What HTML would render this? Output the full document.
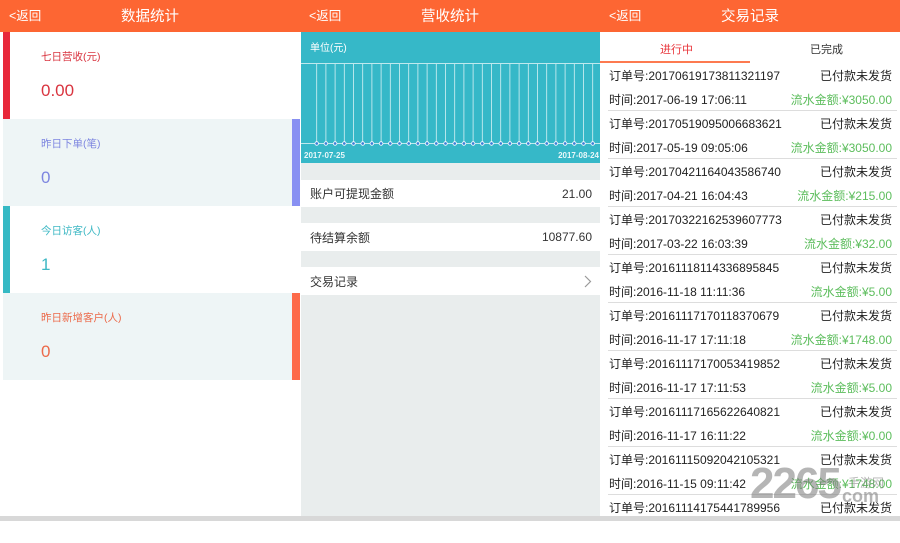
<!DOCTYPE html>
<html><head><meta charset="utf-8"><style>
*{margin:0;padding:0;box-sizing:border-box}
body{width:900px;height:521px;overflow:hidden;background:#fff;font-family:"Liberation Sans","Noto Sans CJK SC",sans-serif;position:relative}
.abs{position:absolute}
.hdr{position:absolute;top:0;height:32px;width:300px;background:#fd6633;color:#fff}
.hdr .b{position:absolute;left:9px;top:9px;font-size:12.5px;line-height:14px}
.hdr .t{position:absolute;left:0;right:0;text-align:center;top:8px;font-size:14.5px;line-height:18px}
.card{position:absolute;left:3px;width:297px;height:87px}
.card .l{position:absolute;left:38px;top:17px;font-size:10.5px}
.card .v{position:absolute;left:38px;top:49px;font-size:17px}
.row{position:absolute;left:301px;width:299px;background:#fff;font-size:12px;color:#333}
.row span{position:absolute;top:0;bottom:0;display:flex;align-items:center}
.rec{position:absolute;left:600px;width:297px;height:48px;font-size:12px;color:#222;line-height:14px}
.rec .a{position:absolute;left:9px;top:6px}
.rec .s{position:absolute;right:5px;top:6px}
.rec .c{position:absolute;left:9px;top:30px}
.rec .m{position:absolute;right:5px;top:30px;color:#5cbd5c}
.rec .ln{position:absolute;left:8px;right:0;top:47px;height:1px;background:#ddd}
</style></head><body>
<div class="hdr" style="left:0"><span class="b">&lt;返回</span><span class="t">数据统计</span></div>
<div class="card" style="top:32px;background:#fff"><div class="abs" style="left:0;top:0;width:7px;height:87px;background:#e8283a"></div><span class="l" style="color:#d9343f">七日营收(元)</span><span class="v" style="color:#d9343f">0.00</span></div>
<div class="card" style="top:119px;background:#eef5f6"><div class="abs" style="right:0;top:0;width:8px;height:87px;background:#8890f2"></div><span class="l" style="color:#7d86e0">昨日下单(笔)</span><span class="v" style="color:#7d86e0">0</span></div>
<div class="card" style="top:206px;background:#fff"><div class="abs" style="left:0;top:0;width:7px;height:87px;background:#36b9c4"></div><span class="l" style="color:#3eb8c4">今日访客(人)</span><span class="v" style="color:#3eb8c4">1</span></div>
<div class="card" style="top:293px;background:#eef5f6"><div class="abs" style="right:0;top:0;width:8px;height:87px;background:#fd6a4a"></div><span class="l" style="color:#ec6a4a">昨日新增客户(人)</span><span class="v" style="color:#ec6a4a">0</span></div>
<div class="abs" style="left:301px;top:32px;width:299px;height:484px;background:#e9eded"></div>
<div class="hdr" style="left:300px"><span class="b">&lt;返回</span><span class="t">营收统计</span></div>
<svg class="abs" style="left:301px;top:32px" width="299" height="131">
<rect width="299" height="131" fill="#36b8c8"/>
<text x="9" y="19" font-size="10" fill="#fff" font-family="Liberation Sans,Noto Sans CJK SC,sans-serif">单位(元)</text>
<line x1="0" y1="31.5" x2="299" y2="31.5" stroke="#bfe9ee" stroke-width="1"/>
<line x1="0" y1="111.5" x2="299" y2="111.5" stroke="#bfe9ee" stroke-width="1"/>
<g stroke="#d6f1f4" stroke-width="0.8">
<line x1="15.7" y1="32" x2="15.7" y2="111"/><line x1="24.9" y1="32" x2="24.9" y2="111"/><line x1="34.1" y1="32" x2="34.1" y2="111"/><line x1="43.3" y1="32" x2="43.3" y2="111"/><line x1="52.5" y1="32" x2="52.5" y2="111"/><line x1="61.7" y1="32" x2="61.7" y2="111"/><line x1="70.9" y1="32" x2="70.9" y2="111"/><line x1="80.1" y1="32" x2="80.1" y2="111"/><line x1="89.3" y1="32" x2="89.3" y2="111"/><line x1="98.5" y1="32" x2="98.5" y2="111"/><line x1="107.7" y1="32" x2="107.7" y2="111"/><line x1="116.9" y1="32" x2="116.9" y2="111"/><line x1="126.1" y1="32" x2="126.1" y2="111"/><line x1="135.3" y1="32" x2="135.3" y2="111"/><line x1="144.5" y1="32" x2="144.5" y2="111"/><line x1="153.7" y1="32" x2="153.7" y2="111"/><line x1="162.9" y1="32" x2="162.9" y2="111"/><line x1="172.1" y1="32" x2="172.1" y2="111"/><line x1="181.3" y1="32" x2="181.3" y2="111"/><line x1="190.5" y1="32" x2="190.5" y2="111"/><line x1="199.7" y1="32" x2="199.7" y2="111"/><line x1="208.9" y1="32" x2="208.9" y2="111"/><line x1="218.1" y1="32" x2="218.1" y2="111"/><line x1="227.3" y1="32" x2="227.3" y2="111"/><line x1="236.5" y1="32" x2="236.5" y2="111"/><line x1="245.7" y1="32" x2="245.7" y2="111"/><line x1="254.9" y1="32" x2="254.9" y2="111"/><line x1="264.1" y1="32" x2="264.1" y2="111"/><line x1="273.3" y1="32" x2="273.3" y2="111"/><line x1="282.5" y1="32" x2="282.5" y2="111"/><line x1="291.7" y1="32" x2="291.7" y2="111"/>
</g>
<g fill="#3a7fd8" stroke="#fff" stroke-width="0.8">
<circle cx="15.7" cy="111.5" r="1.8"/><circle cx="24.9" cy="111.5" r="1.8"/><circle cx="34.1" cy="111.5" r="1.8"/><circle cx="43.3" cy="111.5" r="1.8"/><circle cx="52.5" cy="111.5" r="1.8"/><circle cx="61.7" cy="111.5" r="1.8"/><circle cx="70.9" cy="111.5" r="1.8"/><circle cx="80.1" cy="111.5" r="1.8"/><circle cx="89.3" cy="111.5" r="1.8"/><circle cx="98.5" cy="111.5" r="1.8"/><circle cx="107.7" cy="111.5" r="1.8"/><circle cx="116.9" cy="111.5" r="1.8"/><circle cx="126.1" cy="111.5" r="1.8"/><circle cx="135.3" cy="111.5" r="1.8"/><circle cx="144.5" cy="111.5" r="1.8"/><circle cx="153.7" cy="111.5" r="1.8"/><circle cx="162.9" cy="111.5" r="1.8"/><circle cx="172.1" cy="111.5" r="1.8"/><circle cx="181.3" cy="111.5" r="1.8"/><circle cx="190.5" cy="111.5" r="1.8"/><circle cx="199.7" cy="111.5" r="1.8"/><circle cx="208.9" cy="111.5" r="1.8"/><circle cx="218.1" cy="111.5" r="1.8"/><circle cx="227.3" cy="111.5" r="1.8"/><circle cx="236.5" cy="111.5" r="1.8"/><circle cx="245.7" cy="111.5" r="1.8"/><circle cx="254.9" cy="111.5" r="1.8"/><circle cx="264.1" cy="111.5" r="1.8"/><circle cx="273.3" cy="111.5" r="1.8"/><circle cx="282.5" cy="111.5" r="1.8"/><circle cx="291.7" cy="111.5" r="1.8"/>
</g>
<text x="3" y="126" font-size="8" font-weight="bold" fill="#e8f7f9" font-family="Liberation Sans,sans-serif">2017-07-25</text>
<text x="298" y="126" font-size="8" font-weight="bold" fill="#e8f7f9" text-anchor="end" font-family="Liberation Sans,sans-serif">2017-08-24</text>
</svg>
<div class="row" style="top:180px;height:27px"><span style="left:9px">账户可提现金额</span><span style="right:8px">21.00</span></div>
<div class="row" style="top:223px;height:28px"><span style="left:9px">待结算余额</span><span style="right:8px">10877.60</span></div>
<div class="row" style="top:267px;height:28px"><span style="left:9px">交易记录</span><svg class="abs" style="right:8px;top:8px" width="8" height="13"><path d="M1 1 L6.5 6.5 L1 12" stroke="#999" stroke-width="1.2" fill="none"/></svg></div>
<div class="hdr" style="left:600px"><span class="b">&lt;返回</span><span class="t">交易记录</span></div>
<div class="abs" style="left:600px;top:32px;width:297px;height:31px;background:#fff;font-size:11px">
<span class="abs" style="left:60px;top:9px;color:#e8343a">进行中</span>
<span class="abs" style="left:210px;top:9px;color:#333">已完成</span>
<div class="abs" style="left:0;top:29px;width:150px;height:2px;background:#fd7a50"></div>
</div>
<div class="rec" style="top:63px"><span class="a">订单号:20170619173811321197</span><span class="s">已付款未发货</span><span class="c">时间:2017-06-19 17:06:11</span><span class="m">流水金额:¥3050.00</span><div class="ln"></div></div>
<div class="rec" style="top:111px"><span class="a">订单号:20170519095006683621</span><span class="s">已付款未发货</span><span class="c">时间:2017-05-19 09:05:06</span><span class="m">流水金额:¥3050.00</span><div class="ln"></div></div>
<div class="rec" style="top:159px"><span class="a">订单号:20170421164043586740</span><span class="s">已付款未发货</span><span class="c">时间:2017-04-21 16:04:43</span><span class="m">流水金额:¥215.00</span><div class="ln"></div></div>
<div class="rec" style="top:207px"><span class="a">订单号:20170322162539607773</span><span class="s">已付款未发货</span><span class="c">时间:2017-03-22 16:03:39</span><span class="m">流水金额:¥32.00</span><div class="ln"></div></div>
<div class="rec" style="top:255px"><span class="a">订单号:20161118114336895845</span><span class="s">已付款未发货</span><span class="c">时间:2016-11-18 11:11:36</span><span class="m">流水金额:¥5.00</span><div class="ln"></div></div>
<div class="rec" style="top:303px"><span class="a">订单号:20161117170118370679</span><span class="s">已付款未发货</span><span class="c">时间:2016-11-17 17:11:18</span><span class="m">流水金额:¥1748.00</span><div class="ln"></div></div>
<div class="rec" style="top:351px"><span class="a">订单号:20161117170053419852</span><span class="s">已付款未发货</span><span class="c">时间:2016-11-17 17:11:53</span><span class="m">流水金额:¥5.00</span><div class="ln"></div></div>
<div class="rec" style="top:399px"><span class="a">订单号:20161117165622640821</span><span class="s">已付款未发货</span><span class="c">时间:2016-11-17 16:11:22</span><span class="m">流水金额:¥0.00</span><div class="ln"></div></div>
<div class="rec" style="top:447px"><span class="a">订单号:20161115092042105321</span><span class="s">已付款未发货</span><span class="c">时间:2016-11-15 09:11:42</span><span class="m">流水金额:¥1748.00</span><div class="ln"></div></div>
<div class="rec" style="top:495px"><span class="a">订单号:20161114175441789956</span><span class="s">已付款未发货</span></div>
<div class="abs" style="left:750px;top:462px;font-size:44px;font-weight:bold;color:rgba(120,120,120,0.55);letter-spacing:-2px;line-height:44px">2265</div>
<div class="abs" style="left:848px;top:474px;font-size:12px;color:rgba(120,120,120,0.55)">手游网</div>
<div class="abs" style="left:842px;top:486px;font-size:18px;font-weight:bold;color:rgba(120,120,120,0.55)">com</div>
<div class="abs" style="left:0;top:516px;width:900px;height:5px;background:#d8d8d8"></div>
</body></html>
